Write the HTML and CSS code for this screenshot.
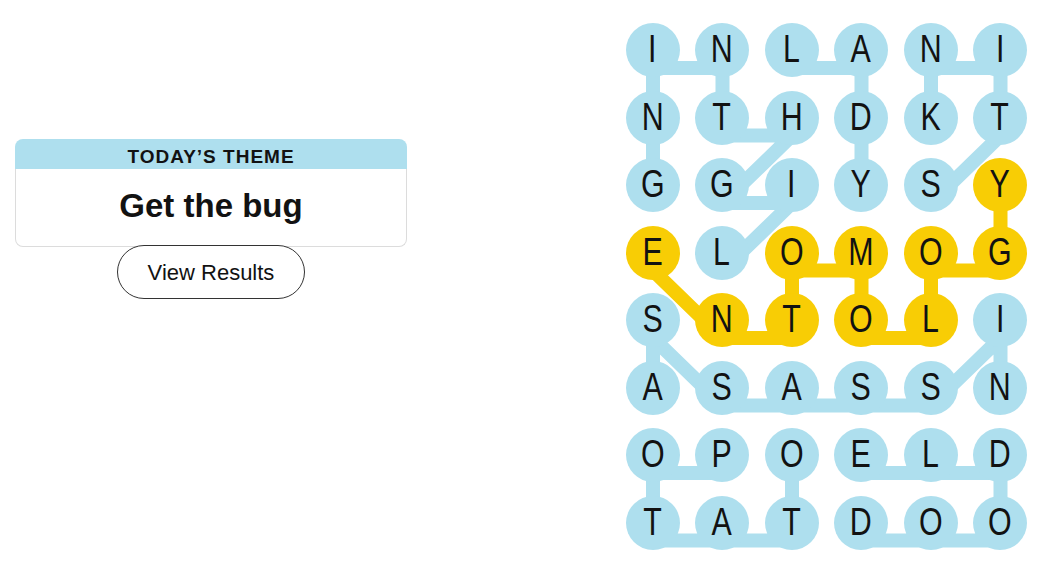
FILE: index.html
```html
<!DOCTYPE html>
<html lang="en">
<head>
    <meta charset="UTF-8">
    <meta name="viewport" content="width=device-width, initial-scale=1.0">
    <title>Strands</title>
    <link rel="stylesheet" href="styles.css">
</head>
<body>

<main class="game">
    <section class="theme-panel">
        <div class="theme-card">
            <h2 class="theme-label">TODAY’S THEME</h2>
            <div class="theme-body">
                <p class="theme-name">Get the bug</p>
            </div>
        </div>
        <button class="results-btn">View Results</button>
    </section>

    <section class="board">
        <!-- connectors, drawn under the letters -->
        <svg class="board-lines" viewBox="0 0 401.5 526.5">
            <g class="found-line">
                <!-- lightning -->
                <polyline points="96.5,247.5 166,180 96.5,180 166,112.5 96.5,112.5 96.5,45 27,45 27,112.5 27,180"/>
                <!-- lady -->
                <polyline points="166,45 235.5,45 235.5,112.5 235.5,180"/>
                <!-- stink -->
                <polyline points="305,180 374.5,112.5 374.5,45 305,45 305,112.5"/>
                <!-- assassin -->
                <polyline points="27,382.5 27,315 96.5,382.5 166,382.5 235.5,382.5 305,382.5 374.5,315 374.5,382.5"/>
                <!-- potato -->
                <polyline points="96.5,450 27,450 27,517.5 96.5,517.5 166,517.5 166,450"/>
                <!-- doodle -->
                <polyline points="235.5,517.5 305,517.5 374.5,517.5 374.5,450 305,450 235.5,450"/>
            </g>
            <g class="spangram-line">
                <polyline points="27,247.5 96.5,315 166,315 166,247.5 235.5,247.5 235.5,315 305,315 305,247.5 374.5,247.5 374.5,180"/>
            </g>
        </svg>

        <div class="grid">
            <div class="cell"><span>I</span></div>
            <div class="cell"><span>N</span></div>
            <div class="cell"><span>L</span></div>
            <div class="cell"><span>A</span></div>
            <div class="cell"><span>N</span></div>
            <div class="cell"><span>I</span></div>

            <div class="cell"><span>N</span></div>
            <div class="cell"><span>T</span></div>
            <div class="cell"><span>H</span></div>
            <div class="cell"><span>D</span></div>
            <div class="cell"><span>K</span></div>
            <div class="cell"><span>T</span></div>

            <div class="cell"><span>G</span></div>
            <div class="cell"><span>G</span></div>
            <div class="cell"><span>I</span></div>
            <div class="cell"><span>Y</span></div>
            <div class="cell"><span>S</span></div>
            <div class="cell spangram"><span>Y</span></div>

            <div class="cell spangram"><span>E</span></div>
            <div class="cell"><span>L</span></div>
            <div class="cell spangram"><span>O</span></div>
            <div class="cell spangram"><span>M</span></div>
            <div class="cell spangram"><span>O</span></div>
            <div class="cell spangram"><span>G</span></div>

            <div class="cell"><span>S</span></div>
            <div class="cell spangram"><span>N</span></div>
            <div class="cell spangram"><span>T</span></div>
            <div class="cell spangram"><span>O</span></div>
            <div class="cell spangram"><span>L</span></div>
            <div class="cell"><span>I</span></div>

            <div class="cell"><span>A</span></div>
            <div class="cell"><span>S</span></div>
            <div class="cell"><span>A</span></div>
            <div class="cell"><span>S</span></div>
            <div class="cell"><span>S</span></div>
            <div class="cell"><span>N</span></div>

            <div class="cell"><span>O</span></div>
            <div class="cell"><span>P</span></div>
            <div class="cell"><span>O</span></div>
            <div class="cell"><span>E</span></div>
            <div class="cell"><span>L</span></div>
            <div class="cell"><span>D</span></div>

            <div class="cell"><span>T</span></div>
            <div class="cell"><span>A</span></div>
            <div class="cell"><span>T</span></div>
            <div class="cell"><span>D</span></div>
            <div class="cell"><span>O</span></div>
            <div class="cell"><span>O</span></div>
        </div>
    </section>
</main>

</body>
</html>
```

FILE: styles.css
```css
body {
    font-family: "Liberation Sans", Arial, sans-serif;
    margin: 0;
    padding: 0;
    background: #fff;
    color: #121212;
}
.game {
    display: flex;
    align-items: flex-start;
    padding: 23px 13px 0 15px;
}
.theme-panel {
    width: 392px;
    margin-top: 116px;
    display: flex;
    flex-direction: column;
    align-items: center;
}
.theme-card {
    width: 100%;
}
.theme-label {
    margin: 0;
    height: 30px;
    line-height: 35px;
    background: #aedfee;
    border-radius: 8px 8px 0 0;
    text-align: center;
    font-size: 19px;
    font-weight: bold;
    letter-spacing: 1px;
}
.theme-body {
    height: 78px;
    border: 1px solid #dcdcdc;
    border-top: none;
    border-radius: 0 0 8px 8px;
    display: flex;
    align-items: center;
    justify-content: center;
    padding-bottom: 3px;
    box-sizing: border-box;
}
.theme-name {
    margin: 0;
    font-size: 33px;
    font-weight: bold;
}
.results-btn {
    position: relative;
    margin-top: -2px;
    width: 188px;
    height: 54px;
    padding-top: 3px;
    background: #fff;
    border: 1px solid #333;
    border-radius: 27px;
    font-family: "Liberation Sans", Arial, sans-serif;
    font-size: 22px;
    color: #121212;
    cursor: pointer;
}
.board {
    position: relative;
    margin-left: auto;
    width: 401.5px;
    height: 526.5px;
}
.board-lines {
    position: absolute;
    left: 0;
    top: 0;
    width: 100%;
    height: 100%;
}
.board-lines polyline {
    fill: none;
    stroke-width: 14;
    stroke-linecap: round;
    stroke-linejoin: round;
}
.found-line polyline {
    stroke: #aedfee;
}
.spangram-line polyline {
    stroke: #f8cd05;
}
.grid {
    position: relative;
    display: grid;
    grid-template-columns: repeat(6, 54px);
    grid-auto-rows: 54px;
    column-gap: 15.5px;
    row-gap: 13.5px;
}
.cell {
    border-radius: 50%;
    background: #aedfee;
    display: flex;
    align-items: center;
    justify-content: center;
    font-size: 38px;
    line-height: 1;
    padding-bottom: 2px;
    box-sizing: border-box;
}
.cell span {
    display: inline-block;
    transform: scaleX(0.8);
}
.cell.spangram {
    background: #f8cd05;
}
```
